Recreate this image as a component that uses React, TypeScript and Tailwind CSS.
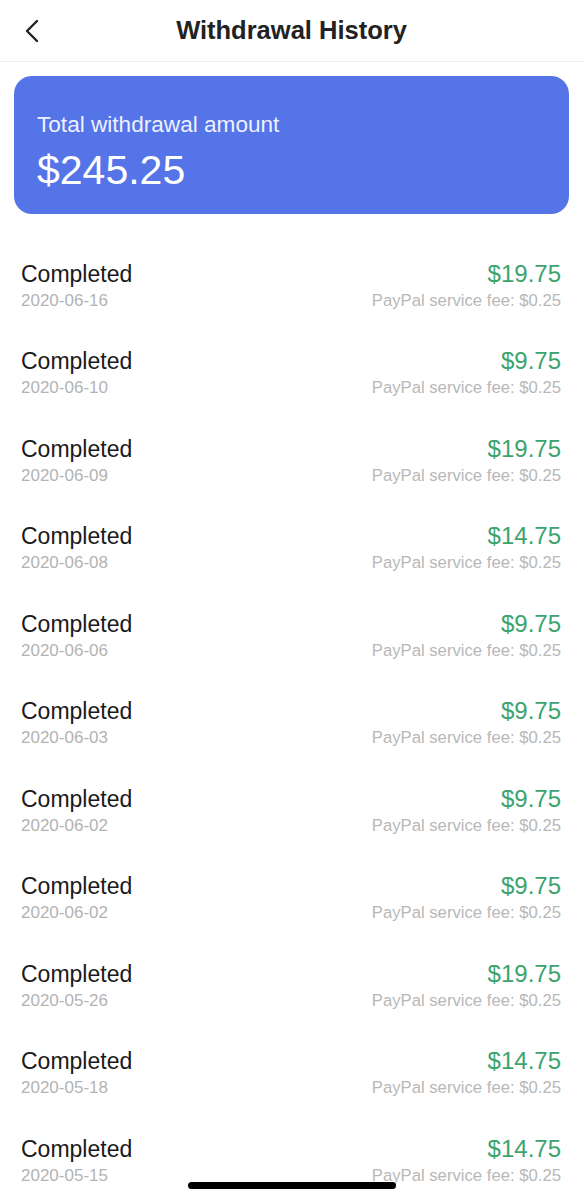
import React from "react";

const rows: [string, string][] = [
  ["2020-06-16", "$19.75"],
  ["2020-06-10", "$9.75"],
  ["2020-06-09", "$19.75"],
  ["2020-06-08", "$14.75"],
  ["2020-06-06", "$9.75"],
  ["2020-06-03", "$9.75"],
  ["2020-06-02", "$9.75"],
  ["2020-06-02", "$9.75"],
  ["2020-05-26", "$19.75"],
  ["2020-05-18", "$14.75"],
  ["2020-05-15", "$14.75"],
];

export default function App() {
  return (
    <div
      className="relative w-[583px] h-[1200px] overflow-hidden bg-white"
      style={{ fontFamily: '"Liberation Sans", Arial, sans-serif' }}
    >
      <div className="relative flex h-[62px] items-center justify-center border-b border-[#ececec]">
        <svg
          className="absolute left-[22px] top-[19px]"
          width="20"
          height="24"
          viewBox="0 0 20 24"
          fill="none"
        >
          <path d="M15 2 L5 12 L15 22" stroke="#222" strokeWidth="2.4" strokeLinecap="round" strokeLinejoin="round" />
        </svg>
        <span className="text-[25.5px] font-bold text-[#222]">Withdrawal History</span>
      </div>

      <div className="mx-[14px] mt-[14px] h-[138px] rounded-[18px] bg-[#5474e8] pl-[23px] pt-[36px] text-white">
        <div className="text-[22.6px] leading-[26px] text-[#eef1ff]">Total withdrawal amount</div>
        <div className="mt-[8px] text-[41px] leading-[48px]">$245.25</div>
      </div>

      <div className="mt-[28px]">
        {rows.map(([date, amt], i) => (
          <div key={i} className="flex h-[87.5px] items-center justify-between pl-[21px] pr-[22px]">
            <div className="flex flex-col">
              <span className="text-[23px] leading-[26px] text-[#1a1a1a]">Completed</span>
              <span className="mt-[4px] text-[17px] leading-[20px] text-[#b3b3b3]">{date}</span>
            </div>
            <div className="flex flex-col items-end">
              <span className="text-[24px] leading-[26px] text-[#3ca36d]">{amt}</span>
              <span className="mt-[4px] text-[16.7px] leading-[20px] text-[#b8b8b8]">PayPal service fee: $0.25</span>
            </div>
          </div>
        ))}
      </div>

      <div className="absolute bottom-[11px] left-[188px] h-[7px] w-[208px] rounded-full bg-black" />
    </div>
  );
}
